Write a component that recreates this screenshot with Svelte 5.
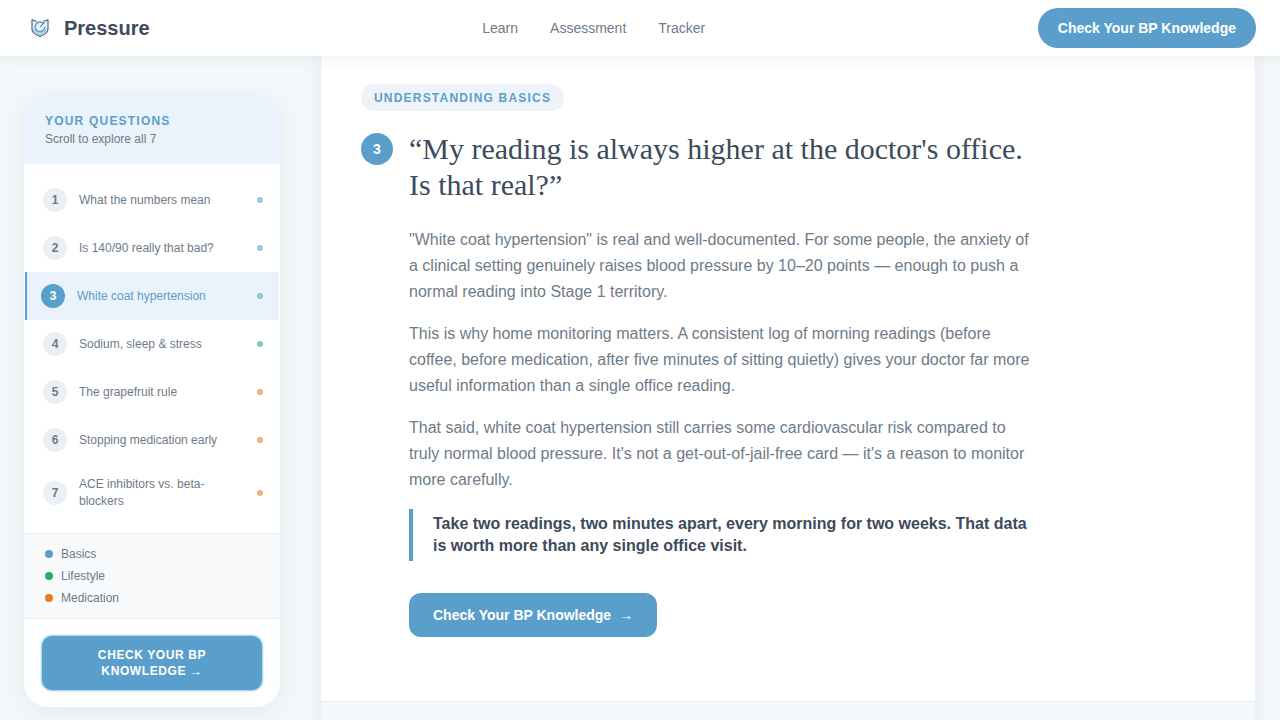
<script>
  const questions = [
    { n: 1, label: 'What the numbers mean', cat: 'basics' },
    { n: 2, label: 'Is 140/90 really that bad?', cat: 'basics' },
    { n: 3, label: 'White coat hypertension', cat: 'basics', active: true },
    { n: 4, label: 'Sodium, sleep & stress', cat: 'lifestyle' },
    { n: 5, label: 'The grapefruit rule', cat: 'medication' },
    { n: 6, label: 'Stopping medication early', cat: 'medication' },
    { n: 7, label: 'ACE inhibitors vs. beta-blockers', cat: 'medication' }
  ];
  const legend = [
    { cat: 'basics', label: 'Basics' },
    { cat: 'lifestyle', label: 'Lifestyle' },
    { cat: 'medication', label: 'Medication' }
  ];
</script>

<div class="page">
  <header class="nav">
    <div class="brand">
      <svg class="logo" width="20" height="20" viewBox="0 0 20 20" fill="none" aria-hidden="true">
        <path d="M2 1.8 L6.2 3.2 Q10 1.6 13.8 3.2 L18 1.8 V11.5 Q17.5 15.4 10 18.4 Q2.5 15.4 2 11.5 Z" fill="#a8d8ea" fill-opacity="0.3" />
        <path d="M3 10.2 Q10 15.6 17 10.2 V12 Q15.5 15.2 10 17.4 Q4.5 15.2 3 12 Z" fill="#a8d8ea" />
        <path d="M2 1.8 L6.2 3.2 M18 1.8 L13.8 3.2 M2 1.8 V11.5 Q2.5 15.4 10 18.4 Q17.5 15.4 18 11.5 V1.8" stroke="#4a5a6a" stroke-width="1.1" stroke-linejoin="round" stroke-linecap="round" />
        <path d="M13.4 5.4 A4.8 4.8 0 1 0 14.8 9.2" stroke="#5a9fcb" stroke-width="1.5" stroke-linecap="round" />
        <path d="M10.4 8.6 L14.2 4.6" stroke="#4a5a6a" stroke-width="1" stroke-linecap="round" />
      </svg>
      <span class="brand-name">Pressure</span>
    </div>
    <nav class="links">
      <a href="#learn">Learn</a>
      <a href="#assessment">Assessment</a>
      <a href="#tracker">Tracker</a>
    </nav>
    <a class="nav-cta" href="#check">Check Your BP Knowledge</a>
  </header>

  <div class="layout">
    <aside class="side">
      <div class="side-head">
        <div class="side-title">YOUR QUESTIONS</div>
        <div class="side-sub">Scroll to explore all 7</div>
      </div>
      <ul class="qlist">
        {#each questions as q}
          <li class="q" class:active={q.active}>
            <span class="qnum">{q.n}</span>
            <span class="qlabel">{q.label}</span>
            <span class="qdot {q.cat}"></span>
          </li>
        {/each}
      </ul>
      <div class="legend">
        {#each legend as l}
          <div class="legend-row"><span class="ldot {l.cat}"></span>{l.label}</div>
        {/each}
      </div>
      <div class="side-cta">
        <a class="side-btn" href="#check">CHECK YOUR BP KNOWLEDGE →</a>
      </div>
    </aside>

    <main class="main">
      <article class="article">
        <span class="tag">UNDERSTANDING BASICS</span>
        <div class="title-row">
          <span class="title-num">3</span>
          <h1>“My reading is always higher at the doctor's office. Is that real?”</h1>
        </div>
        <div class="body">
          <p>"White coat hypertension" is real and well-documented. For some people, the anxiety of a clinical setting genuinely raises blood pressure by 10–20 points — enough to push a normal reading into Stage 1 territory.</p>
          <p>This is why home monitoring matters. A consistent log of morning readings (before coffee, before medication, after five minutes of sitting quietly) gives your doctor far more useful information than a single office reading.</p>
          <p>That said, white coat hypertension still carries some cardiovascular risk compared to truly normal blood pressure. It's not a get-out-of-jail-free card — it's a reason to monitor more carefully.</p>
          <blockquote>Take two readings, two minutes apart, every morning for two weeks. That data is worth more than any single office visit.</blockquote>
          <a class="main-btn" href="#check">Check Your BP Knowledge <span class="arrow">→</span></a>
        </div>
      </article>
      <div class="foot"></div>
    </main>
  </div>
</div>

<style>
  :global(body) {
    margin: 0;
    background: #f4f8fb;
    font-family: "Liberation Sans", Arial, sans-serif;
    overflow: hidden;
  }
  .page {
    height: 720px;
    overflow: hidden;
    background: #f4f8fb;
  }
  .nav {
    position: relative;
    z-index: 2;
    height: 56px;
    box-sizing: border-box;
    padding: 0 24px 0 30px;
    background: #fff;
    box-shadow: 0 2px 12px rgba(44, 62, 80, 0.08);
    display: flex;
    justify-content: space-between;
    align-items: center;
  }
  .brand {
    display: flex;
    align-items: center;
    gap: 14px;
  }
  .brand-name {
    font-size: 20px;
    font-weight: 700;
    color: #3d4a5c;
  }
  .links {
    display: flex;
    gap: 32px;
  }
  .links a {
    font-size: 14px;
    color: #6e7b88;
    text-decoration: none;
  }
  .nav-cta {
    background: #5a9fcb;
    color: #fff;
    font-size: 14px;
    font-weight: 700;
    text-decoration: none;
    padding: 0 20px;
    height: 40px;
    line-height: 40px;
    border-radius: 20px;
  }
  .layout {
    display: flex;
    align-items: flex-start;
    gap: 40px;
    padding: 0 24px;
  }
  .side {
    flex: 0 0 256px;
    box-sizing: border-box;
    margin-top: 39px;
    background: #fff;
    border-radius: 24px;
    box-shadow: 0 4px 24px rgba(44, 62, 80, 0.08);
    overflow: hidden;
  }
  .side-head {
    height: 69px;
    box-sizing: border-box;
    padding: 19px 21px 0;
    background: #eaf2fb;
  }
  .side-title {
    font-size: 12px;
    font-weight: 700;
    letter-spacing: 1.2px;
    color: #5a9fcb;
    line-height: 15px;
  }
  .side-sub {
    font-size: 12px;
    color: #6e7b88;
    line-height: 14px;
    margin-top: 3px;
  }
  .qlist {
    list-style: none;
    margin: 0;
    padding: 12px 1px;
  }
  .q {
    display: flex;
    align-items: center;
    min-height: 48px;
    box-sizing: border-box;
    padding: 0 16px 0 18px;
    gap: 12px;
  }
  .q:last-child {
    min-height: 57px;
  }
  .q.active {
    background: #eaf2fb;
    border-left: 2px solid #5a9fcb;
    padding-left: 14px;
  }
  .qnum {
    flex: none;
    width: 24px;
    height: 24px;
    border-radius: 50%;
    background: #eaf0f6;
    color: #6e7b88;
    font-size: 12px;
    font-weight: 700;
    display: flex;
    align-items: center;
    justify-content: center;
  }
  .active .qnum {
    background: #5a9fcb;
    color: #fff;
  }
  .qlabel {
    flex: 1;
    font-size: 12px;
    line-height: 17px;
    color: #6e7b88;
  }
  .active .qlabel {
    color: #5a9fcb;
  }
  .qdot {
    flex: none;
    width: 6px;
    height: 6px;
    border-radius: 50%;
    opacity: 0.6;
  }
  .basics { background: #5a9fcb; }
  .lifestyle { background: #27ae60; }
  .medication { background: #e67e22; }
  .qdot.basics { background: #5ba3c0; }
  .legend {
    border-top: 1px solid #eef2f6;
    border-bottom: 1px solid #eef2f6;
    background: #f8fafc;
    padding: 9px 21px;
  }
  .legend-row {
    display: flex;
    align-items: center;
    gap: 8px;
    font-size: 12px;
    line-height: 22px;
    color: #6e7b88;
  }
  .ldot {
    width: 8px;
    height: 8px;
    border-radius: 50%;
  }
  .side-cta {
    padding: 15px 16px;
  }
  .side-btn {
    display: block;
    box-sizing: border-box;
    margin: 1px;
    background: #5a9fcb;
    color: #fff;
    font-size: 12px;
    font-weight: 700;
    letter-spacing: 0.6px;
    line-height: 16px;
    text-align: center;
    text-decoration: none;
    padding: 11px 24px;
    border-radius: 11px;
    border: 1px solid #b4daef;
    box-shadow: 0 0 0 1px rgba(168, 216, 234, 0.35);
  }
  .main {
    flex: 0 0 936px;
    box-sizing: border-box;
    border: 1px solid #eef2f6;
    border-top: 0;
    background: #fff;
    box-shadow: 0 0 16px rgba(44, 62, 80, 0.07);
  }
  .article {
    height: 645px;
    box-sizing: border-box;
    padding: 28px 40px 0;
  }
  .tag {
    display: inline-block;
    font-size: 12px;
    font-weight: 700;
    letter-spacing: 1.2px;
    color: #5a9fcb;
    background: #edf3f9;
    padding: 7px 13px 5px;
    line-height: 15px;
    border-radius: 14px;
  }
  .title-row {
    display: flex;
    gap: 16px;
    margin-top: 20px;
    max-width: 680px;
  }
  .title-num {
    flex: none;
    width: 32px;
    height: 32px;
    border-radius: 50%;
    background: #5a9fcb;
    color: #fff;
    font-size: 14px;
    font-weight: 700;
    display: flex;
    align-items: center;
    justify-content: center;
    margin-top: 2px;
  }
  h1 {
    margin: 0;
    font-family: "Liberation Serif", "Times New Roman", serif;
    font-weight: 400;
    font-size: 30px;
    line-height: 36px;
    color: #3d4a5c;
  }
  .body {
    margin-left: 48px;
    margin-top: 24px;
    width: 624px;
  }
  p {
    margin: 0 0 16px;
    font-size: 16px;
    line-height: 26px;
    color: #6e7b88;
  }
  blockquote {
    margin: 0;
    border-left: 4px solid #5a9fcb;
    padding: 4px 0 4px 20px;
    font-size: 16px;
    font-weight: 700;
    line-height: 22px;
    color: #3d4a5c;
  }
  .main-btn {
    display: inline-flex;
    align-items: center;
    gap: 8px;
    margin-top: 32px;
    height: 44px;
    padding: 0 24px;
    background: #5a9fcb;
    color: #fff;
    font-size: 14px;
    font-weight: 700;
    text-decoration: none;
    border-radius: 12px;
  }
  .arrow {
    font-weight: 400;
  }
  .foot {
    height: 30px;
    background: #f4f8fb;
    border-top: 1px solid #eef2f6;
  }
</style>
